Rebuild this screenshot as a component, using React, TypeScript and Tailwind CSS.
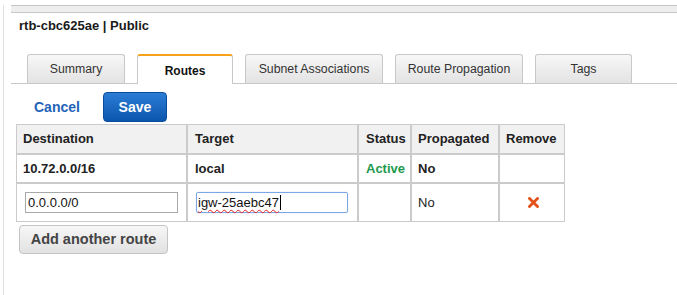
import React from 'react'

type Route = {
  destination: string
  target: string
  status: string
  propagated: string
}

const tabs = [
  { label: 'Summary', width: 'w-[98px]', active: false },
  { label: 'Routes', width: 'w-[96px]', active: true },
  { label: 'Subnet Associations', width: 'w-[138px]', active: false },
  { label: 'Route Propagation', width: 'w-[128px]', active: false },
  { label: 'Tags', width: 'w-[97px]', active: false },
]

const routes: Route[] = [
  { destination: '10.72.0.0/16', target: 'local', status: 'Active', propagated: 'No' },
]

const RemoveIcon = () => (
  <svg width="11" height="11" viewBox="0 0 11 11" className="inline-block">
    <path d="M1.5 1.5 L9.5 9.5 M9.5 1.5 L1.5 9.5" stroke="#e4521b" strokeWidth="2.8" strokeLinecap="square" />
  </svg>
)

export default function App() {
  return (
    <div className="h-[295px] w-[677px] overflow-hidden bg-white pl-[3px] font-['Liberation_Sans',Arial,sans-serif] text-[#222]">
      <div className="h-full border-l border-[#e2e2e2] pl-[7px]">
        {/* header strip */}
        <div className="mt-[5px] h-[8px] border-y border-[#c6c6c6] bg-[#eeeeee]" />

        <div className="mt-[5px] pl-[8px] text-[13px] font-bold leading-[16px] text-[#1a1a1a]">
          rtb-cbc625ae | Public
        </div>

        {/* tabs */}
        <div className="mt-[20px] flex h-[30px] items-end gap-[12px] border-b border-[#c8c8c8] pl-[16px]">
          {tabs.map(tab =>
            tab.active ? (
              <div
                key={tab.label}
                className={`${tab.width} relative -mb-px flex h-[30px] items-center justify-center rounded-t-[3px] border-x border-t-2 border-x-[#c8c8c8] border-t-[#f7a21b] bg-white text-[12px] font-bold text-[#111]`}
              >
                <span className="mt-[2px]">{tab.label}</span>
              </div>
            ) : (
              <div
                key={tab.label}
                className={`${tab.width} flex h-[29px] items-center justify-center rounded-t-[3px] border-x border-t border-[#c8c8c8] bg-gradient-to-b from-[#f7f7f7] to-[#e3e3e3] text-[12.3px] text-[#333]`}
              >
                {tab.label}
              </div>
            )
          )}
        </div>

        {/* actions */}
        <div className="mt-[8px] flex h-[30px] items-center">
          <span className="ml-[23px] text-[14px] font-bold text-[#1f63b8]">Cancel</span>
          <button className="ml-[23px] h-[30px] w-[64px] rounded-[4px] border border-[#0b4c9c] bg-gradient-to-b from-[#2b7dd6] to-[#0a55ad] text-[14px] font-bold text-white">
            Save
          </button>
        </div>

        {/* routes table */}
        <table className="ml-[5px] mt-[2px] w-[549px] table-fixed border-separate border-spacing-0 text-[13px]">
          <colgroup>
            <col className="w-[171px]" />
            <col className="w-[171px]" />
            <col className="w-[53px]" />
            <col className="w-[88px]" />
            <col className="w-[66px]" />
          </colgroup>
          <thead>
            <tr className="h-[30px] bg-[#f1f1f1] text-left">
              <th className="border border-[#cbcbcb] pl-[6px] font-bold">Destination</th>
              <th className="border border-[#cbcbcb] pl-[7px] font-bold">Target</th>
              <th className="border border-[#cbcbcb] pl-[7px] font-bold">Status</th>
              <th className="border border-[#cbcbcb] pl-[6px] font-bold">Propagated</th>
              <th className="border border-[#cbcbcb] pl-[6px] font-bold">Remove</th>
            </tr>
          </thead>
          <tbody>
            {routes.map(r => (
              <tr key={r.destination} className="h-[29px] font-bold">
                <td className="border border-[#cbcbcb] pl-[6px]">{r.destination}</td>
                <td className="border border-[#cbcbcb] pl-[7px]">{r.target}</td>
                <td className="border border-[#cbcbcb] pl-[7px] text-[#1e9a4b]">{r.status}</td>
                <td className="border border-[#cbcbcb] pl-[6px]">{r.propagated}</td>
                <td className="border border-[#cbcbcb]" />
              </tr>
            ))}
            <tr className="h-[39px]">
              <td className="border border-[#cbcbcb] pl-[8px]">
                <div className="flex h-[21px] w-[153px] items-center border border-[#a9a9a9] pl-[2px] text-[13px] text-[#111]">
                  0.0.0.0/0
                </div>
              </td>
              <td className="border border-[#cbcbcb] pl-[8px]">
                <div className="flex h-[21px] w-[152px] items-center rounded-[2px] border border-[#7da6e6] pl-[1px] text-[13px] text-[#111] shadow-[0_0_1px_#9cc0f0]">
                  <span className="underline decoration-[#e02020] decoration-wavy decoration-1 underline-offset-2">
                    igw-25aebc47
                  </span>
                  <span className="ml-px h-[15px] w-px bg-black" />
                </div>
              </td>
              <td className="border border-[#cbcbcb]" />
              <td className="border border-[#cbcbcb] pl-[6px]">No</td>
              <td className="border border-[#cbcbcb] pb-[2px] pl-[2px] text-center">
                <RemoveIcon />
              </td>
            </tr>
          </tbody>
        </table>

        <button className="ml-[8px] mt-[3px] h-[29px] w-[149px] rounded-[4px] border border-[#c4c4c4] bg-gradient-to-b from-[#f7f7f7] to-[#e1e1e1] text-[14.5px] font-bold text-[#444]">
          Add another route
        </button>
      </div>
    </div>
  )
}
